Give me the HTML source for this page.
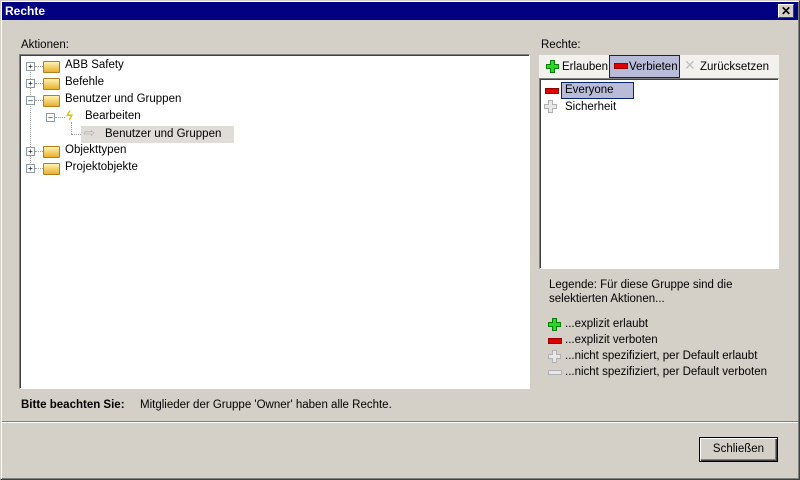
<!DOCTYPE html>
<html><head><style>
body{margin:0;width:800px;height:480px;background:#d4d0c8;font-family:"Liberation Sans",sans-serif;font-size:11.5px;color:#000;position:relative;overflow:hidden}
.a{position:absolute;white-space:nowrap}
.win{position:absolute;left:0;top:0;width:798px;height:478px;border:1px solid;border-color:#d4d0c8 #404040 #404040 #d4d0c8;box-shadow:inset 1px 1px #fff,inset -1px -1px #808080}
.title{position:absolute;left:2px;top:2px;width:796px;height:18px;background:#000080;color:#fff;font-weight:bold;font-size:12px;line-height:18px}
.sunk{position:absolute;background:#fff;border:1px solid;border-color:#808080 #fff #fff #808080;box-shadow:inset 1px 1px #404040}
.folder{position:absolute;width:15px;height:10px;background:linear-gradient(#fff2b0,#e8b030);border:1px solid #b08020;border-radius:1px}
.pm{position:absolute;width:7px;height:7px;border:1px solid #8a9aa8;background:#fff;font-size:8px;line-height:7px;text-align:center}
</style></head><body>
<div class="win"></div>
<div class="title"><span class="a" style="left:3px;top:0">Rechte</span>
<div class="a" style="right:4px;top:2px;width:14px;height:12px;background:#d4d0c8;border:1px solid;border-color:#fff #404040 #404040 #fff;color:#000;font-size:12px;line-height:12px;text-align:center">✕</div></div>

<div class="a" style="left:21px;top:39px">Aktionen:</div>
<div class="sunk" style="left:19px;top:54px;width:509px;height:333px"></div>
<div class="a" style="left:30px;top:66px;height:103px;border-left:1px dotted #a0a0a0"></div>
<div class="pm" style="left:26px;top:62px">+</div><div class="a" style="left:35px;top:66px;width:8px;border-top:1px dotted #a0a0a0"></div><div class="folder" style="left:43px;top:61px"></div><div class="a" style="left:65px;top:59px">ABB Safety</div>
<div class="pm" style="left:26px;top:79px">+</div><div class="a" style="left:35px;top:83px;width:8px;border-top:1px dotted #a0a0a0"></div><div class="folder" style="left:43px;top:78px"></div><div class="a" style="left:65px;top:76px">Befehle</div>
<div class="pm" style="left:26px;top:96px">–</div><div class="a" style="left:35px;top:100px;width:8px;border-top:1px dotted #a0a0a0"></div><div class="folder" style="left:43px;top:95px"></div><div class="a" style="left:65px;top:93px">Benutzer und Gruppen</div>
<div class="pm" style="left:46px;top:113px">–</div><div class="a" style="left:55px;top:117px;width:10px;border-top:1px dotted #a0a0a0"></div><div class="a" style="left:66px;top:108px;color:#e0c000;font-weight:bold;font-style:italic;font-size:13px">ϟ</div><div class="a" style="left:85px;top:110px">Bearbeiten</div>
<div class="a" style="left:71px;top:122px;height:12px;border-left:1px dotted #a0a0a0"></div><div class="a" style="left:71px;top:134px;width:12px;border-top:1px dotted #a0a0a0"></div>
<div class="a" style="left:81px;top:126px;width:153px;height:17px;background:#e0ddd8"></div><div class="a" style="left:84px;top:125px;color:#b0b0b0;font-size:13px">⇨</div><div class="a" style="left:105px;top:128px">Benutzer und Gruppen</div>
<div class="pm" style="left:26px;top:147px">+</div><div class="a" style="left:35px;top:151px;width:8px;border-top:1px dotted #a0a0a0"></div><div class="folder" style="left:43px;top:146px"></div><div class="a" style="left:65px;top:144px">Objekttypen</div>
<div class="pm" style="left:26px;top:164px">+</div><div class="a" style="left:35px;top:168px;width:8px;border-top:1px dotted #a0a0a0"></div><div class="folder" style="left:43px;top:163px"></div><div class="a" style="left:65px;top:161px">Projektobjekte</div>

<div class="a" style="left:541px;top:39px">Rechte:</div>
<div class="a" style="left:539px;top:55px;width:240px;height:23px;background:#f2f1ee"></div>
<svg class="a" style="left:546px;top:60px" width="13" height="13"><path d="M4.5 .5h4v4h4v4h-4v4h-4v-4h-4v-4h4z" fill="#22dd22" stroke="#0a7a0a"/></svg>
<div class="a" style="left:562px;top:61px">Erlauben</div>
<div class="a" style="left:609px;top:55px;width:69px;height:21px;background:#b8bcd8;border:1px solid #0a246a"></div>
<div class="a" style="left:614px;top:63px;width:12px;height:4px;background:#e00000;border:1px solid #900"></div>
<div class="a" style="left:629px;top:61px">Verbieten</div>
<div class="a" style="left:684px;top:57px;color:#c0c0c0;font-size:14px">✕</div>
<div class="a" style="left:700px;top:61px">Zurücksetzen</div>
<div class="sunk" style="left:539px;top:78px;width:238px;height:189px"></div>
<div class="a" style="left:545px;top:88px;width:12px;height:4px;background:#e00000;border:1px solid #900"></div>
<div class="a" style="left:561px;top:82px;width:71px;height:15px;background:#b8bcd8;border:1px solid #0a246a"></div>
<div class="a" style="left:565px;top:84px">Everyone</div>
<svg class="a" style="left:544px;top:100px" width="13" height="13"><path d="M4.5 .5h4v4h4v4h-4v4h-4v-4h-4v-4h4z" fill="#e8e8e8" stroke="#b0b0b0"/></svg>
<div class="a" style="left:565px;top:101px">Sicherheit</div>

<div class="a" style="left:549px;top:278px;line-height:14px">Legende: Für diese Gruppe sind die<br>selektierten Aktionen...</div>
<svg class="a" style="left:548px;top:318px" width="13" height="13"><path d="M4.5 .5h4v4h4v4h-4v4h-4v-4h-4v-4h4z" fill="#22dd22" stroke="#0a7a0a"/></svg>
<div class="a" style="left:565px;top:318px">...explizit erlaubt</div>
<div class="a" style="left:548px;top:338px;width:12px;height:4px;background:#e00000;border:1px solid #900"></div>
<div class="a" style="left:565px;top:334px">...explizit verboten</div>
<svg class="a" style="left:548px;top:350px" width="13" height="13"><path d="M4.5 .5h4v4h4v4h-4v4h-4v-4h-4v-4h4z" fill="#e8e8e8" stroke="#b0b0b0"/></svg>
<div class="a" style="left:565px;top:350px">...nicht spezifiziert, per Default erlaubt</div>
<div class="a" style="left:548px;top:370px;width:12px;height:3px;background:#e8e8e8;border:1px solid #b0b0b0"></div>
<div class="a" style="left:565px;top:366px">...nicht spezifiziert, per Default verboten</div>

<div class="a" style="left:21px;top:399px;font-weight:bold;font-size:11.5px">Bitte beachten Sie:</div>
<div class="a" style="left:140px;top:399px">Mitglieder der Gruppe 'Owner' haben alle Rechte.</div>

<div class="a" style="left:2px;top:421px;width:796px;border-top:1px solid #808080;border-bottom:1px solid #fff"></div>
<div class="a" style="left:699px;top:437px;width:77px;height:23px;border:1px solid #000;background:#d4d0c8;box-shadow:inset 1px 1px #fff,inset -1px -1px #404040,inset -2px -2px #808080;text-align:center;line-height:23px">Schließen</div>
</body></html>
